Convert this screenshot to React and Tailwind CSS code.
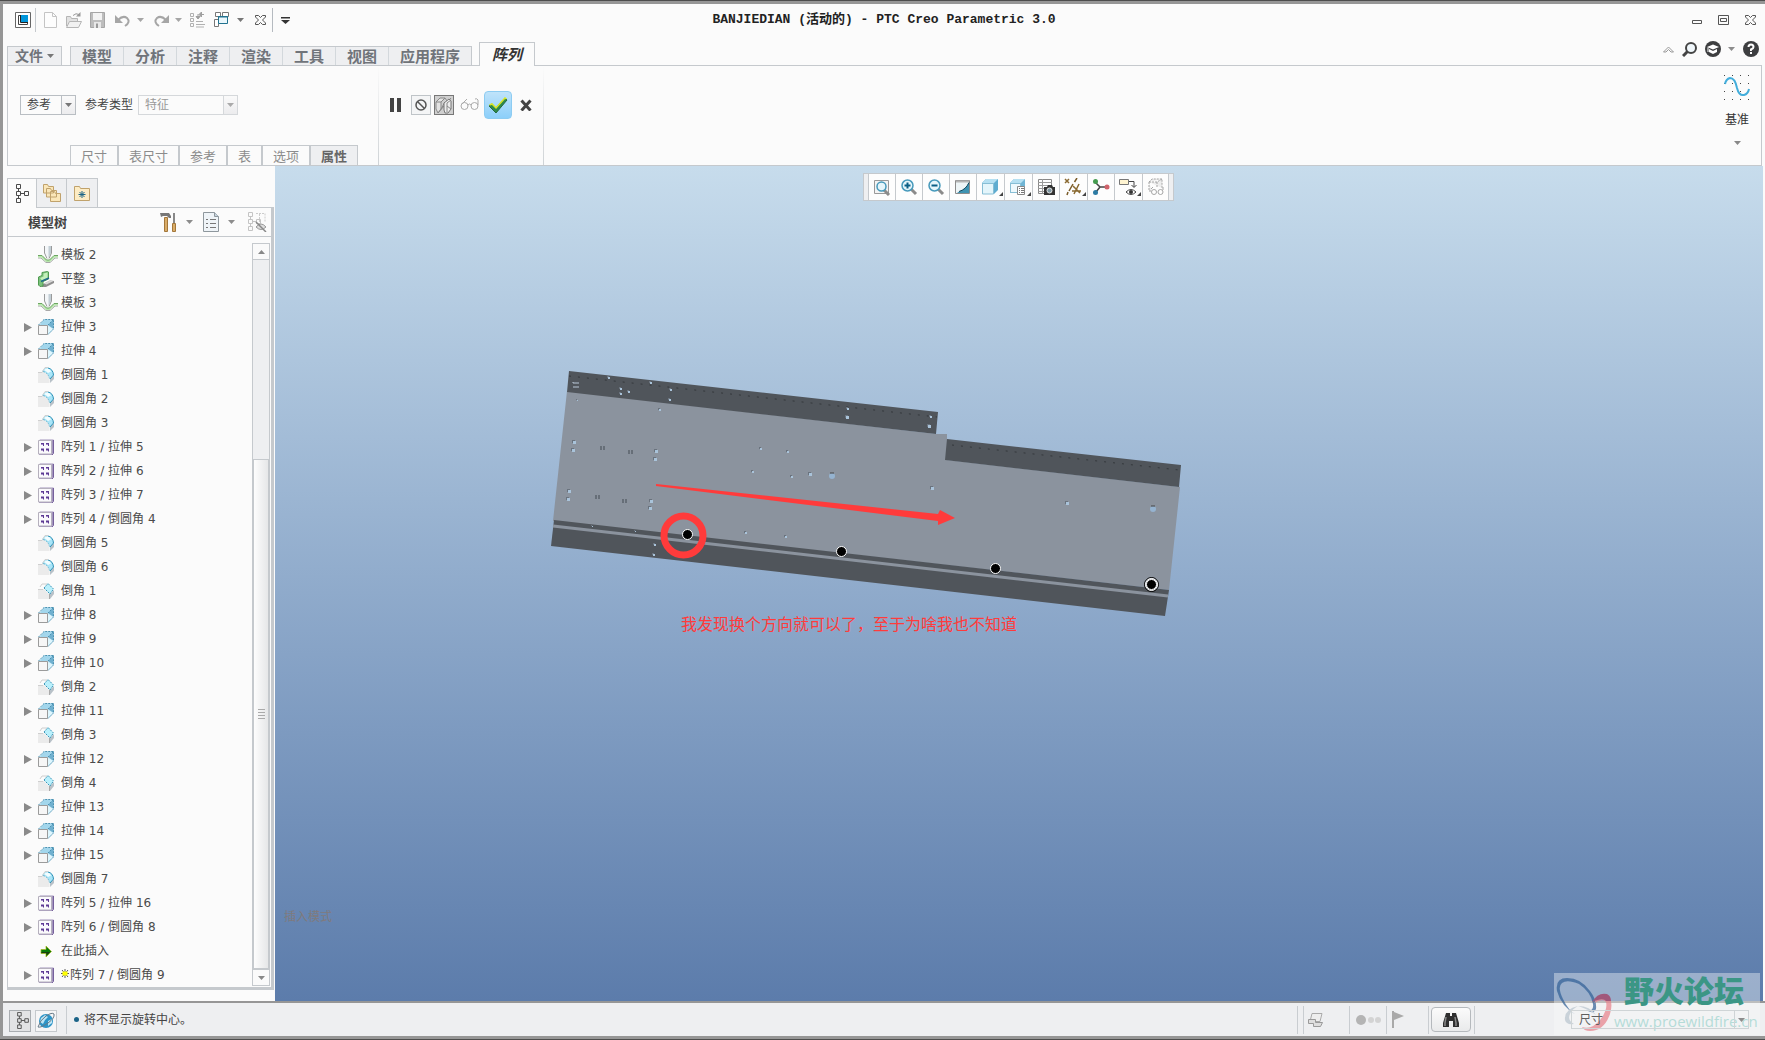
import React, { useState } from 'react';

const ribbonTabs = ['模型', '分析', '注释', '渲染', '工具', '视图', '应用程序'];

const panelTabs = ['尺寸', '表尺寸', '参考', '表', '选项', '属性'];

const treeItems = [
  { icon: 'punch', label: '模板 2' },
  { icon: 'flat', label: '平整 3' },
  { icon: 'punch', label: '模板 3' },
  { icon: 'extrude', label: '拉伸 3', open: true },
  { icon: 'extrude', label: '拉伸 4', open: true },
  { icon: 'round', label: '倒圆角 1' },
  { icon: 'round', label: '倒圆角 2' },
  { icon: 'round', label: '倒圆角 3' },
  { icon: 'pattern', label: '阵列 1 / 拉伸 5', open: true },
  { icon: 'pattern', label: '阵列 2 / 拉伸 6', open: true },
  { icon: 'pattern', label: '阵列 3 / 拉伸 7', open: true },
  { icon: 'pattern', label: '阵列 4 / 倒圆角 4', open: true },
  { icon: 'round', label: '倒圆角 5' },
  { icon: 'round', label: '倒圆角 6' },
  { icon: 'chamfer', label: '倒角 1' },
  { icon: 'extrude', label: '拉伸 8', open: true },
  { icon: 'extrude', label: '拉伸 9', open: true },
  { icon: 'extrude', label: '拉伸 10', open: true },
  { icon: 'chamfer', label: '倒角 2' },
  { icon: 'extrude', label: '拉伸 11', open: true },
  { icon: 'chamfer', label: '倒角 3' },
  { icon: 'extrude', label: '拉伸 12', open: true },
  { icon: 'chamfer', label: '倒角 4' },
  { icon: 'extrude', label: '拉伸 13', open: true },
  { icon: 'extrude', label: '拉伸 14', open: true },
  { icon: 'extrude', label: '拉伸 15', open: true },
  { icon: 'round', label: '倒圆角 7' },
  { icon: 'pattern', label: '阵列 5 / 拉伸 16', open: true },
  { icon: 'pattern', label: '阵列 6 / 倒圆角 8', open: true },
  { icon: 'insert', label: '在此插入' },
  { icon: 'pattern', label: '阵列 7 / 倒圆角 9', open: true, isNew: true }
];

// holes in the sheet metal part: x, y, size
const holes = [
  [608, 377, 2], [650, 382, 2], [620, 388, 2], [628, 391, 2], [620, 393, 2],
  [670, 389, 2], [669, 399, 2], [659, 409, 2], [846, 416, 3], [847, 408, 2],
  [577, 400, 1], [573, 441, 3], [572, 449, 3], [655, 450, 3], [654, 458, 3],
  [568, 490, 3], [567, 498, 3], [650, 500, 3], [649, 507, 3], [760, 448, 2],
  [787, 451, 2], [752, 471, 2], [791, 476, 2], [809, 473, 3], [930, 416, 2],
  [928, 425, 3], [931, 487, 3], [1066, 502, 3], [745, 532, 2], [785, 536, 2],
  [592, 526, 1], [635, 531, 1], [654, 544, 2], [653, 554, 2]
];

const slots = [[602, 448], [630, 452], [597, 497], [624, 501]];

const patternDots = [[687, 534], [841, 551], [995, 568], [1151, 584]];

function Icon({ size = 16, className = '', children }) {
  return (
    <svg width={size} height={size} viewBox={`0 0 ${size} ${size}`} className={`shrink-0 ${className}`} fill="none" aria-hidden="true">
      {children}
    </svg>
  );
}

function Caret({ className = 'text-[#8c8c8c]' }) {
  return (
    <svg width="7" height="4" viewBox="0 0 7 4" className={`shrink-0 ${className}`} aria-hidden="true">
      <path d="M0 0h7L3.5 4z" fill="currentColor" />
    </svg>
  );
}

function TreeGlyph({ color = '#4a4a4a' }) {
  return (
    <g stroke={color} fill="none">
      <path d="M1.5.5h4v4h-4zM1.5 7.5h4v4h-4zM1.5 14.5h4v4h-4zM9.5 7.5h4v4h-4zM3.5 4.5v3M3.5 11.5v3M5.5 9.5h4" />
    </g>
  );
}

function FeatureIcon({ name }) {
  if (name === 'punch') {
    return (
      <svg width="20" height="18" viewBox="0 0 20 18" className="shrink-0" fill="none" aria-hidden="true">
        <path d="M0 12h3l5 4.500h4L17 12h3" stroke="#a8a8a8" />
        <path d="M0 10.500h3.500l5 4.500h3l5-4.500H20" stroke="#b9e6ae" strokeWidth="2" />
        <path d="M0 9.500h4l4.500 4.500h3L16 9.500h4" stroke="#6da563" />
        <path d="M6.500 0v7l2.500 5h2l2.500-5V0z" fill="#f4f7f9" />
        <path d="M10.500 0H13v7l-2.500 5z" fill="#c2ced5" />
        <path d="M6.500 0v7l2.500 5.500M13.500 0v7L11 12.500" stroke="#9a9a9a" />
      </svg>
    );
  }
  if (name === 'flat') {
    return (
      <Icon>
        <path d="M3 14l9-4.500 4 .500v2l-8 4H4z" fill="#8f8f8f" />
        <path d="M6 12.500l6-3 3.500.500-7 3.500z" fill="#d8d8d8" />
        <path d="M.500 14V6L4 4.500V1.500L9.500.500l1 .500v7L5 10.500V15l-3 .500z" fill="#7cc27c" stroke="#4f9a50" />
        <path d="M2 7l3.500-1.500V2.500l4-1V7L4 9.500z" fill="#c4f0bb" />
        <path d="M3 10.500L11 7" stroke="#206a8c" strokeWidth="1.500" />
      </Icon>
    );
  }
  if (name === 'extrude') {
    return (
      <Icon>
        <path d="M1 6L6 .500h9.500V10L10 15.500H.500z" fill="#c9e9f6" />
        <path d="M6 .500h9.500L10 6H2z" fill="#a2d6ec" />
        <path d="M15.500.500V10L10 6z" fill="#6fb0cf" />
        <path d="M15 10l-5 5V7z" fill="#dff6fd" />
        <path d="M.500 6L6 .500h9.500V10L10 15.500M15.500.500L10 6" stroke="#4c92b2" strokeDasharray="2 1" />
        <path d="M.500 6.500h9v9h-9z" fill="#f6f6f6" stroke="#9b9b9b" />
      </Icon>
    );
  }
  if (name === 'round') {
    return (
      <Icon>
        <path d="M0 5h5q6 1 6.500 7v4H0z" fill="#ebebeb" />
        <path d="M12 12l4-4v4l-4 4z" fill="#b8c1c8" />
        <path d="M4 4q3-4 6-3 5 1 5.500 7L12 12Q11 6 4 4z" fill="#a9e5f8" />
        <path d="M6 3q2-2 4-1.500 2 .500 3 3L10 6q-2-2-4-3z" fill="#f2fdff" />
        <path d="M10 1q5 1 5.500 7L12 12" stroke="#2b8fb5" />
        <path d="M5 4.500q5 1 6.500 7" stroke="#60b4d0" strokeDasharray="2 1" />
        <path d="M0 5.500h4L7 .500h3" stroke="#cfcfcf" />
      </Icon>
    );
  }
  if (name === 'chamfer') {
    return (
      <Icon>
        <path d="M0 6h6l5 5v5H0z" fill="#ebebeb" />
        <path d="M12 11l4-4v4l-4 5z" fill="#b8c1c8" />
        <path d="M6 5l4-4.500L15.500 6 12 11z" fill="#b9f0fc" stroke="#3d96b8" strokeDasharray="2 1" />
        <path d="M0 6.500h5M2 4l2-3h5" stroke="#cfcfcf" />
        <path d="M11.500 11v5" stroke="#aaa" />
      </Icon>
    );
  }
  if (name === 'pattern') {
    return (
      <Icon>
        <path d="M1 1.500L2 .500h13.500V14L14 15.500H1z" fill="#a395bd" />
        <path d="M15.500 1v13.500L14 16H1" stroke="#76609c" />
        <path d="M.500 1.500h13v13.500H.500z" fill="#faf9fc" stroke="#b5b0bd" />
        <path d="M3 4h3v3H5V5H3zM8 4h3v3h-1V5H8zM3 9.500h3v3H5v-1H3zM8 9.500h3v3h-1v-1H8z" fill="#5d3a94" />
        <path d="M3 5h2v1H3zM8 5h2v1H8z" fill="#a48bc8" />
      </Icon>
    );
  }
  return (
    <Icon>
      <path d="M3 6.500h5V3l5.500 5.500L8 14v-3.500H3z" fill="#087a08" stroke="#a7b61d" strokeWidth=".7" />
      <path d="M3.500 9H12l-3.500 3.500V10h-5z" fill="#1d3d10" />
    </Icon>
  );
}

const magnifier = (
  <>
    <path d="M11 11l5 5" stroke="#8b8b8b" strokeWidth="3" />
    <circle cx="7.500" cy="7.500" r="5.500" fill="#e6f6fb" stroke="#4699bb" strokeWidth="1.500" />
  </>
);

// ## Graphics toolbar
const viewTools = [
  {
    name: '重新调整',
    art: (
      <>
        <path d="M1.500 2.500h14v13h-14z" fill="#f4f4f4" stroke="#999" />
        <path d="M11 12l5 5" stroke="#8b8b8b" strokeWidth="3" />
        <circle cx="8.500" cy="8.500" r="4.500" fill="#e6f6fb" stroke="#4699bb" strokeWidth="1.500" />
      </>
    )
  },
  { name: '放大', art: <>{magnifier}<path d="M4.500 7.500h6M7.500 4.500v6" stroke="#0b5f86" strokeWidth="2" /></> },
  { name: '缩小', art: <>{magnifier}<path d="M4.500 7.500h6" stroke="#0b5f86" strokeWidth="2" /></> },
  {
    name: '重画',
    art: (
      <>
        <path d="M1.500 2.500h14v13h-14z" fill="#eef5f7" stroke="#8c8c8c" />
        <path d="M15 4v11H3l3-2q6-2 9-9z" fill="#3f93b2" />
        <path d="M5 13.500q7-2 10-9" stroke="#12495e" />
        <path d="M2 3.500h13" stroke="#b5b5b5" strokeWidth="2" />
      </>
    )
  },
  {
    name: '显示样式',
    menu: true,
    art: (
      <>
        <path d="M1 5l4-4h12v11l-4 4H1z" fill="#5eacd0" />
        <path d="M1 5l4-4h12l-4 4z" fill="#b5e0f2" />
        <path d="M1.500 5.500h11v10.500h-11z" fill="#e3f5fb" stroke="#87bed5" />
      </>
    )
  },
  {
    name: '已命名视图',
    menu: true,
    art: (
      <>
        <path d="M1 5l4-4h11v11l-4 3H1z" fill="#6fb5d5" />
        <path d="M1 5l4-4h11l-4 4z" fill="#b5e0f2" />
        <path d="M1.500 5.500h10v9h-10z" fill="#eef9fd" stroke="#87bed5" />
        <path d="M8.500 8.500h7v8h-7z" fill="#fff" stroke="#888" />
        <path d="M10 10.500h1M12 10.500h3M10 12.500h1M12 12.500h3M10 14.500h1M12 14.500h3" stroke="#777" />
      </>
    )
  },
  {
    name: '视图管理器',
    art: (
      <>
        <path d="M1.500 1.500h13v14h-13z" fill="#fff" stroke="#888" />
        <path d="M5.500 1v15M1 4.500h14M1 7.500h14M1 10.500h14M1 13.500h14" stroke="#999" />
        <path d="M7 9h3l1-2h4l1 2h2v8H7z" fill="#333" />
        <circle cx="12.500" cy="12.500" r="2.500" fill="#7d96a1" stroke="#e4e4e4" />
      </>
    )
  },
  {
    name: '基准显示过滤器',
    menu: true,
    art: (
      <>
        <path d="M1 1l4 4M5 1L1 5" stroke="#8a6a32" strokeWidth="1.500" />
        <path d="M13 0l-2.500 4M9 6l-4 7M4 14l-1 3" stroke="#7a5b28" strokeWidth="1.500" />
        <path d="M9 8l7 7M15 6l-5 10M8 13h9" stroke="#8a6a32" strokeWidth="1.500" />
      </>
    )
  },
  {
    name: '旋转中心',
    art: (
      <>
        <path d="M3 4l5 5-4 5M8 9h6" stroke="#444" strokeWidth="1.500" />
        <circle cx="3.500" cy="3.500" r="2.500" fill="#459c50" />
        <circle cx="3.500" cy="14.500" r="2.500" fill="#2d7ba4" />
        <circle cx="15" cy="9" r="2.500" fill="#d0636b" />
      </>
    )
  },
  {
    name: '注释显示',
    menu: true,
    art: (
      <>
        <path d="M.500 1.500h9v5h-9z" fill="#fff4d1" stroke="#777" />
        <path d="M10 3.500h5V9M12.500 7l2.500 2.500L17.500 7" stroke="#444" />
        <path d="M7 14q5-5 10 0-5 5-10 0z" fill="#fff" stroke="#444" />
        <circle cx="12" cy="14" r="2" fill="#333" />
      </>
    )
  },
  {
    name: '预览',
    art: (
      <g stroke="#a5a5a5">
        <path d="M2 4l3-3h10v9M2 4v9h3M2 4h8l5-3M10 4v6" fill="#ededed" strokeDasharray="2 1" />
        <circle cx="7" cy="14" r="2.500" fill="#fff" />
        <circle cx="13.500" cy="14" r="2.500" fill="#fff" />
        <path d="M4 11l2-2M16 12V9" />
      </g>
    )
  }
];

function QuickAccess() {
  const button = 'flex h-6 items-center';
  return (
    <div className="flex items-center">
      <button type="button" aria-label="窗口" className={`${button} ml-3`}>
        <Icon>
          <path d="M.500.500h15v15H.500z" fill="#fff" stroke="#666" />
          <path d="M3.500 3.500h9v9h-9z" stroke="#444" />
          <path d="M6 3h7v7H6z" fill="#0096db" />
          <path d="M5.500 3v7.500H13" stroke="#222" />
        </Icon>
      </button>
      <span className="ml-1 h-6 w-px bg-[#c5c9cd]" />
      <button type="button" aria-label="新建" className={`${button} ml-[7px]`}>
        <Icon>
          <path d="M1.500.500h8l4 4v11h-12z" fill="#fdfdfd" stroke="#c4c4c4" />
          <path d="M9.500.500v4h4" stroke="#c4c4c4" />
        </Icon>
      </button>
      <button type="button" aria-label="打开" className={`${button} ml-[7px]`}>
        <Icon>
          <path d="M.500 14V4.500h4l1 2h6v3" fill="#e2e2e2" stroke="#b5b5b5" />
          <path d="M.500 15.500l3-6h12l-3 6z" fill="#f1f1f1" stroke="#b5b5b5" />
          <path d="M7 3.500q3-3 6-1" stroke="#999" />
          <path d="M14.500 0v4.500H10z" fill="#999" />
        </Icon>
      </button>
      <button type="button" aria-label="保存" className={`${button} ml-2`}>
        <Icon>
          <path d="M.500.500h14v15H.500z" fill="#bdbdbd" stroke="#a6a6a6" />
          <path d="M3 1h9v7H3z" fill="#f3f3f3" />
          <path d="M4 10h7v6H4z" fill="#e8e8e8" />
          <path d="M6 11.500h2V16H6z" fill="#999" />
        </Icon>
      </button>
      <button type="button" aria-label="撤消" className={`${button} ml-[9px]`}>
        <Icon>
          <path d="M3 8q5-5 9-2 4 4-2 8" stroke="#a6a6a6" strokeWidth="2" />
          <path d="M0 3v8h8z" fill="#a6a6a6" />
        </Icon>
      </button>
      <button type="button" aria-label="撤消列表" className={`${button} ml-[6px]`}><Caret className="text-[#a6a6a6]" /></button>
      <button type="button" aria-label="重做" className={`${button} ml-[9px]`}>
        <Icon>
          <path d="M13 8Q8 3 4 6q-4 4 2 8" stroke="#a6a6a6" strokeWidth="2" />
          <path d="M16 3v8H8z" fill="#a6a6a6" />
        </Icon>
      </button>
      <button type="button" aria-label="重做列表" className={`${button} ml-[6px]`}><Caret className="text-[#a6a6a6]" /></button>
      <button type="button" aria-label="重新生成" className={`${button} ml-2`}>
        <Icon>
          <path d="M.500 1.500h3v3h-3zM.500 6.500h3v3h-3zM.500 11.500h3v3h-3zM6 9.500h7M6 12.500h9M6 15h8" stroke="#b1b1b1" />
          <path d="M8 5V2M6 4.500l2 2.500 2-2.500zM10 2.500h4M11.500 0L9 2.500 11.500 5z" stroke="#a0a0a0" fill="#a0a0a0" />
        </Icon>
      </button>
      <button type="button" aria-label="切换窗口" className={`${button} ml-2`}>
        <Icon>
          <path d="M1.500.500h5v4h-5zM8.500.500h6v4h-6zM.500 7.500h4v7h-4z" fill="#fff" stroke="#777" />
          <path d="M4.500 4.500h9v7h-9z" fill="#eaf7fc" stroke="#21728f" />
          <path d="M4 5h10" stroke="#21728f" />
        </Icon>
      </button>
      <button type="button" aria-label="窗口列表" className={`${button} ml-[7px]`}><Caret className="text-[#777]" /></button>
      <button type="button" aria-label="关闭" className={`${button} ml-[11px] text-[#555]`}><CloseGlyph /></button>
      <span className="ml-[6px] h-6 w-px bg-[#b5bac0]" />
      <button type="button" aria-label="自定义快速访问工具栏" className={`${button} ml-2`}>
        <svg width="9" height="7" viewBox="0 0 9 7" fill="#333" aria-hidden="true">
          <path d="M0 0h9v1.500H0zM0 3h9L4.500 7z" />
        </svg>
      </button>
    </div>
  );
}

function CloseGlyph() {
  return (
    <svg width="11" height="10" viewBox="0 0 11 10" fill="none" aria-hidden="true">
      <path d="M.500.500h3l2 2 2-2h3v1.500l-3 3 3 3v1.500h-3l-2-2-2 2h-3V8l3-3-3-3z" stroke="currentColor" />
    </svg>
  );
}

function TitleBar() {
  return (
    <header className="grid h-8 grid-cols-[1fr_auto_1fr] items-center">
      <QuickAccess />
      <h1 className="font-['Liberation_Mono','Noto_Sans_CJK_SC',monospace] text-[13px] leading-4 font-bold text-[#222]">
        BANJIEDIAN (活动的) - PTC Creo Parametric 3.0
      </h1>
      <div className="mr-[9px] flex items-center justify-end gap-4 text-[#555]">
        <button type="button" aria-label="最小化">
          <svg width="10" height="10" viewBox="0 0 10 10" fill="none"><path d="M.500 5.500h9v3h-9z" stroke="currentColor" /></svg>
        </button>
        <button type="button" aria-label="最大化">
          <svg width="11" height="10" viewBox="0 0 11 10" fill="none"><path d="M.500.500h10v9H.500zM2.500 3.500h6v3h-6z" stroke="currentColor" /></svg>
        </button>
        <button type="button" aria-label="关闭窗口"><CloseGlyph /></button>
      </div>
    </header>
  );
}

function RibbonTabs() {
  const tab = 'h-[18px] border-r border-[#d3d8dc] px-[11px] text-[15px] leading-4 font-bold text-[#70747a]';
  return (
    <nav className="ml-1 flex h-[29px] items-end">
      <button type="button" className="flex h-[19px] w-[55px] items-center justify-center gap-1 border border-b-0 border-[#c5c9cd] bg-[#eeeff1] text-sm leading-4 font-bold text-[#70747a]">
        文件
        <Caret className="text-[#777]" />
      </button>
      <div className="ml-2 flex border border-b-0 border-[#c5c9cd] bg-[#eeeff1]">
        {ribbonTabs.map((name) => (
          <button key={name} type="button" className={`${tab} last:border-r-0`}>
            {name}
          </button>
        ))}
      </div>
      <button type="button" className="relative -mb-px ml-[7px] h-6 w-14 border border-b-0 border-[#c5c9cd] bg-[#fbfbfb] text-[15px] font-bold text-[#333] italic">
        阵列
      </button>
      <div className="mr-[6px] mb-2 ml-auto flex items-center">
        <button type="button" aria-label="最小化功能区">
          <svg width="11" height="7" viewBox="0 0 11 7" fill="none"><path d="M.500 6L5.500 1l5 5H8L5.500 3.500 3 6z" stroke="#999" /></svg>
        </button>
        <button type="button" aria-label="搜索" className="ml-2">
          <Icon>
            <path d="M6 10l-5 5" stroke="#444" strokeWidth="3" />
            <circle cx="9" cy="7" r="5" fill="#f0f7fb" stroke="#444" strokeWidth="2" />
          </Icon>
        </button>
        <button type="button" aria-label="学习" className="ml-[7px]">
          <Icon>
            <circle cx="8" cy="8" r="8" fill="#3d3e40" />
            <path d="M2 6l6-2.500L14 6 8 8.500z" fill="#fff" />
            <path d="M4 8v3l4 2 4-2V8l-4 2z" fill="#fff" />
            <path d="M3 6.500V11" stroke="#fff" />
          </Icon>
        </button>
        <button type="button" aria-label="学习列表" className="ml-[7px]"><Caret /></button>
        <button type="button" aria-label="帮助" className="ml-2">
          <Icon>
            <circle cx="8" cy="8" r="8" fill="#3d3e40" />
            <path d="M5.500 6q0-2.500 2.500-2.500T10.500 6Q10.500 7.500 8 8.500V10" stroke="#fff" strokeWidth="2" />
            <path d="M7 11h2v2H7z" fill="#fff" />
          </Icon>
        </button>
      </div>
    </nav>
  );
}

function ComboBox({ label, value, disabled, className }) {
  return (
    <div className={`relative flex h-5 items-center border ${disabled ? 'border-[#d5d8db] text-[#999]' : 'border-[#b9bec3] text-[#444]'} ${className}`}>
      <select aria-label={label} disabled={disabled} defaultValue={value} className="h-4 w-full appearance-none pl-[6px] text-xs leading-4 opacity-100 outline-none">
        <option>{value}</option>
      </select>
      <span className="pointer-events-none absolute inset-y-0 right-0 flex w-[14px] items-center justify-center border-l border-inherit bg-gradient-to-b from-[#fafafa] to-[#ececee]">
        <Caret className={disabled ? 'text-[#aaa]' : 'text-[#777]'} />
      </span>
    </div>
  );
}

function Dashboard() {
  const divider = 'w-px bg-gradient-to-b from-transparent to-[#cfd3d6]';
  return (
    <section className="mr-[3px] ml-1 flex h-[101px] border border-[#c5c9cd]">
      <div className="flex w-[370px] flex-col justify-end pl-3">
        <div className="mb-[30px] flex items-center">
          <ComboBox label="阵列类型" value="参考" className="w-14" />
          <span className="ml-[9px] text-xs leading-4 text-[#444]">参考类型</span>
          <ComboBox label="参考类型" value="特征" disabled className="ml-[5px] w-[100px]" />
        </div>
        <div className="ml-[50px] flex self-start border-t border-[#c5c9cd]">
          {panelTabs.map((name) => (
            <button
              key={name}
              type="button"
              className="h-[19px] border-x border-[#c5c9cd] px-[10px] text-[13px] leading-4 text-[#8c8c8c] last:bg-[#eeeff1] last:font-bold last:text-[#666]"
            >
              {name}
            </button>
          ))}
        </div>
      </div>
      <span className={divider} />
      <div className="flex w-[164px] items-center pb-[22px] pl-[11px]">
        <button type="button" aria-label="暂停" className="flex h-[14px] w-[11px] justify-between">
          <span className="h-full w-1 bg-[#444]" />
          <span className="h-full w-1 bg-[#444]" />
        </button>
        <button type="button" aria-label="无预览" className="ml-[10px] flex size-5 items-center justify-center border border-[#bfc4c8] bg-[#f4f5f6]">
          <Icon size={14}>
            <circle cx="7" cy="7" r="5" stroke="#555" strokeWidth="1.500" />
            <path d="M3.500 3.500l7 7" stroke="#555" strokeWidth="1.500" />
          </Icon>
        </button>
        <button type="button" aria-label="连接预览" className="ml-[3px] flex size-5 items-center justify-center border border-[#777] bg-[#cfcfcf]">
          <Icon size={18}>
            <path d="M1 6l4-4h5L6 6v7l-3 4-2-4zM6 6H1M10 2l2 3v8M3 17L16 2M6 13l4-7" fill="#e3e3e3" stroke="#888" />
            <path d="M9 7l5-4 2 2v8l-3 4h-3l-1-3z" fill="#ededed" stroke="#777" />
            <path d="M12 7v9M12 7l4-3M16 13l-4-3" stroke="#888" />
          </Icon>
        </button>
        <button type="button" aria-label="校验" className="ml-[6px]">
          <Icon size={20}>
            <circle cx="4.500" cy="11" r="3.500" stroke="#aaa" />
            <circle cx="14.500" cy="11" r="3.500" stroke="#aaa" />
            <path d="M1 10L7 4M8 10q1.500-2 3 0M18 10V5q-1-2-3-1" stroke="#aaa" />
          </Icon>
        </button>
        <button type="button" aria-label="确定" className="ml-1 flex size-7 items-center justify-center rounded-sm border border-[#8dccf2] bg-gradient-to-b from-[#bfe3fa] to-[#8ccffa]">
          <Icon size={20}>
            <path d="M1 11l3-2 4 4L17 3l2 2L8 18z" fill="#2d8a4b" stroke="#256a3e" />
            <path d="M1.500 10L4 9l4 4 9-10 1.500 1" stroke="#d7e524" strokeWidth="1.500" />
          </Icon>
        </button>
        <button type="button" aria-label="取消" className="ml-2">
          <Icon size={12}>
            <path d="M1.500 1.500l9 10M10.500 1.500l-9 10" stroke="#444" strokeWidth="3" />
          </Icon>
        </button>
      </div>
      <span className={divider} />
      <button type="button" className="mr-[11px] ml-auto flex flex-col items-center pt-2 text-xs text-[#333]">
        <Icon size={26}>
          <g fill="#444">
            {[0, 8, 16, 24].map((x) => [0, 8, 16, 24].map((y) => <rect key={`${x}-${y}`} x={x} y={y + 1} width="1" height="1" />))}
          </g>
          <path d="M1 10Q2 5 6 4q5 0 7 10 2 8 7 7 4-1 5-6" stroke="#42addb" strokeWidth="2" />
        </Icon>
        <span className="mt-3 leading-4">基准</span>
        <Caret className="mt-[13px] text-[#888]" />
      </button>
    </section>
  );
}

function ModelTree() {
  return (
    <aside className="flex w-[272px] shrink-0 flex-col pt-3 pr-px pb-[11px] pl-1">
      <div className="flex h-[29px]">
        <button type="button" aria-label="模型树" className="relative -mb-px flex w-[30px] items-center justify-center border border-b-0 border-[#c5c9cd] bg-[#fbfbfb]">
          <svg width="15" height="19" viewBox="0 0 15 19"><TreeGlyph /></svg>
        </button>
        <button type="button" aria-label="文件夹浏览器" className="flex w-[30px] items-center justify-center border border-b-0 border-l-0 border-[#c5c9cd] bg-[#eeeff1]">
          <Icon size={20}>
            <path d="M1.500 10V1.500h4l1 2h5V10zM4.500 14V5.500h4l1 2h5V14zM8.500 18.500v-10h4l1 2h5v8z" fill="#fae6b8" stroke="#c0a26c" />
          </Icon>
        </button>
        <button type="button" aria-label="收藏夹" className="flex w-[31px] items-center justify-center border border-b-0 border-l-0 border-[#c5c9cd] bg-[#eeeff1]">
          <Icon size={18}>
            <path d="M1.500 16.500v-14h5l1 2h9v12z" fill="#fdecc4" stroke="#c0a26c" />
            <path d="M9 7v7M5.500 10.500h7M6.500 8l5 5M11.500 8l-5 5" stroke="#1c6687" />
          </Icon>
        </button>
      </div>
      <div className="flex flex-1 flex-col border border-r-[3px] border-b-[3px] border-[#c5c9cd]">
        <div className="flex h-[29px] items-center border-b border-[#c5c9cd] pr-1 pl-5">
          <h2 className="text-[13px] leading-4 font-bold text-[#444]">模型树</h2>
          <button type="button" aria-label="设置" className="ml-auto">
            <svg width="18" height="20" viewBox="0 0 18 20" fill="none">
              <path d="M0 1h9l2 3v2H9L7 4H3L1 5z" fill="#777" />
              <path d="M4.500 5.500h3v14h-3z" fill="#d9ac68" stroke="#a3773a" />
              <path d="M14 1v10" stroke="#888" strokeWidth="2" />
              <path d="M12.500 11.500h3v8h-3z" fill="#d9ac68" stroke="#a3773a" />
            </svg>
          </button>
          <button type="button" aria-label="设置列表" className="ml-2"><Caret /></button>
          <button type="button" aria-label="显示" className="ml-[10px]">
            <svg width="16" height="20" viewBox="0 0 16 20" fill="none">
              <path d="M.500.500h11l4 4v15H.500z" fill="#eff4f8" stroke="#8e979d" />
              <path d="M11.500.500v4h4" fill="#c5d3dd" stroke="#8e979d" />
              <path d="M7 7.500h6M7 11.500h6M7 15.500h6M3 7.500h2M3 11.500h2M3 15.500h2" stroke="#777" />
            </svg>
          </button>
          <button type="button" aria-label="显示列表" className="ml-[9px]"><Caret /></button>
          <button type="button" aria-label="隐藏" className="ml-3">
            <svg width="20" height="20" viewBox="0 0 20 20" fill="none">
              <TreeGlyph color="#c4c4c4" />
              <path d="M9 1.500h9v9M12.500 2v8" stroke="#ccc" strokeDasharray="2 1" />
              <path d="M9 15q5-6 10 0-5 5-10 0z" fill="#ddd" stroke="#999" />
              <path d="M9 10l10 10" stroke="#888" strokeWidth="1.500" />
            </svg>
          </button>
        </div>
        <div className="flex flex-1">
          <ul className="flex-1 pt-[6px] font-['DejaVu_Sans','Noto_Sans_CJK_SC',sans-serif] text-xs text-[#4a4a4a]">
            {treeItems.map((item) => (
              <li key={item.label} className="flex h-6 items-center pl-4">
                <span className="w-[14px]">
                  {item.open && (
                    <svg width="8" height="9" viewBox="0 0 8 9" aria-hidden="true"><path d="M0 0l8 4.500L0 9z" fill="#8a8a8a" /></svg>
                  )}
                </span>
                <span className="w-[23px]"><FeatureIcon name={item.icon} /></span>
                {item.isNew && (
                  <svg width="9" height="9" viewBox="0 0 9 9" className="mb-1" fill="none" aria-hidden="true">
                    <path d="M0 4.500h8M4 0v9M1 1l6 7M7 1L1 8" stroke="#333" strokeWidth=".8" />
                    <path d="M1.500 2.500h5v4h-5z" fill="#ff0" />
                  </svg>
                )}
                <span className="leading-4">{item.label}</span>
              </li>
            ))}
          </ul>
          <div className="mt-[6px] mr-px mb-px flex w-[18px] flex-col border border-[#c5c9cd] bg-[#eeeff1]">
            <button type="button" aria-label="向上滚动" className="flex h-4 items-center justify-center border-b border-[#c5c9cd] bg-[#fafafa]">
              <Caret className="rotate-180 text-[#888]" />
            </button>
            <div className="flex-[199]" />
            <div className="flex flex-[509] flex-col items-center justify-center gap-[2px] border border-[#c5c9cd] bg-gradient-to-r from-[#fdfdfd] to-[#e6e7e8]">
              <span className="h-px w-[7px] bg-[#aaa]" />
              <span className="h-px w-[7px] bg-[#aaa]" />
              <span className="h-px w-[7px] bg-[#aaa]" />
              <span className="h-px w-[7px] bg-[#aaa]" />
            </div>
            <button type="button" aria-label="向下滚动" className="flex h-4 items-center justify-center border-t border-[#c5c9cd] bg-[#fafafa]">
              <Caret className="text-[#888]" />
            </button>
          </div>
        </div>
      </div>
    </aside>
  );
}

// ## Sheet metal part with the pattern preview dots
function Part() {
  return (
    <svg width="650" height="270" viewBox="540 360 650 270" className="absolute top-[194px] left-[265px]" fill="none">
      <path d="M567 391L936 434h11v26l233 27-11 103-616-69z" fill="#8b939e" />
      <path d="M569 371l369 41-2 22-369-42z" fill="#50555b" />
      <path d="M947 439l234 26-2 22-234-27z" fill="#50555b" />
      <path d="M554 520l615 70-4 26-614-70z" fill="#50555b" />
      <path d="M553 526l615 70" stroke="#8b939e" strokeWidth="3" />
      <path d="M569 376l368 41M952 445l227 25" stroke="#34383c" strokeDasharray="2 7" />
      <path d="M573 383h6M573 387h6M573 382v1" stroke="#b8c8d8" />
      {slots.map(([x, y]) => (
        <path key={`${x}-${y}`} d={`M${x - 2} ${y - 1}h2m1 0h2m-5 2h2m1 0h2`} stroke="#434a52" />
      ))}
      {holes.map(([x, y, size]) => (
        <g key={`${x}-${y}`}>
          <rect x={x - 1} y={y - 1} width={size} height={size} fill="#6a737e" />
          <rect x={x} y={y} width={size} height={size} fill="#a9c3da" />
        </g>
      ))}
      <circle cx="832" cy="476" r="3" fill="#95b3d0" />
      <circle cx="1153" cy="509" r="3" fill="#95b3d0" />
      <path d="M830 473h4M1151 506h4" stroke="#444" />
      <path d="M656 484l282 30 2-4 15 8-17 7v-4L656 486z" fill="#ff3b3b" />
      <circle cx="683.5" cy="535.5" r="19.5" stroke="#ff3b3b" strokeWidth="7" />
      {patternDots.map(([cx, cy]) => (
        <circle key={cx} cx={cx + 0.5} cy={cy + 0.5} r="5" fill="#000" stroke="#fff" />
      ))}
      <circle cx="1151.5" cy="584.5" r="7" stroke="#000" />
      <circle cx="1151.5" cy="584.5" r="6" stroke="#fff" />
    </svg>
  );
}

function GraphicsArea() {
  return (
    <main className="relative flex-1 overflow-hidden bg-gradient-to-b from-[#c7dcec] to-[#5c7cab]">
      <div className="absolute top-[7px] left-[588px] flex h-7 border border-[#c5c9cd] bg-[#eeeff1]">
        <span className="w-1" />
        {viewTools.map((tool) => (
          <button
            key={tool.name}
            type="button"
            aria-label={tool.name}
            className={`relative flex items-center border-l border-[#c5c9cd] bg-[#fdfdfd] pl-1 last-of-type:border-r ${tool.menu ? 'w-7' : 'w-[27px]'}`}
          >
            <Icon size={18}>{tool.art}</Icon>
            {tool.menu && (
              <svg width="4" height="4" viewBox="0 0 4 4" className="absolute right-px bottom-1" aria-hidden="true"><path d="M4 0v4H0z" fill="#444" /></svg>
            )}
          </button>
        ))}
        <span className="w-1" />
      </div>
      <Part />
      <p className="absolute top-[446px] left-[406px] text-base leading-6 whitespace-nowrap text-[#ff3b3b]">
        我发现换个方向就可以了，至于为啥我也不知道
      </p>
      <p className="absolute bottom-[76px] left-[9px] text-xs leading-4 text-[#7f7a7d]">插入模式</p>
    </main>
  );
}

function StatusBar() {
  const [filter, setFilter] = useState('尺寸');
  const separator = 'h-7 w-px bg-[#c9cdd1]';

  return (
    <footer className="relative flex h-[35px] items-center border-t-2 border-[#969696] bg-[#eeeff1] pl-[6px] text-xs text-[#444]">
      <button type="button" aria-label="导航器" className="mt-[2px] flex size-[22px] items-center justify-end border border-[#a9adb1] bg-[#e2e3e5]">
        <svg width="14" height="17" viewBox="0 0 15 19"><TreeGlyph /></svg>
      </button>
      <button type="button" aria-label="浏览器" className="mt-[2px] ml-1 flex size-[22px] items-center justify-center border border-[#c5c9cd] bg-[#f6f6f7]">
        <Icon size={18}>
          <circle cx="9" cy="9" r="7" fill="#2d94c7" />
          <path d="M4 6l4-3 3 2-3 3-2 4-3-2zM11 9l4-2v4l-4 3z" fill="#bce4f4" />
          <path d="M1 15Q3 8 9 4t8-2q1 4-6 9T1 15z" stroke="#667987" />
        </Icon>
      </button>
      <span className={`${separator} ml-[9px]`} />
      <span className="ml-[7px] size-[5px] rounded-full bg-[#1b6387]" />
      <span className="ml-[5px] leading-4">将不显示旋转中心。</span>
      <div className="ml-auto flex items-center">
        <span className={separator} />
        <span className={`${separator} ml-[5px]`} />
        <Icon className="ml-1">
          <path d="M4 1.500h10l-2 8H2z" fill="#eee" stroke="#aaa" />
          <path d="M.500 7.500h7v3h7l-2 4h-7v-3h-5z" fill="#dedede" stroke="#999" />
        </Icon>
        <span className={`${separator} ml-[25px]`} />
        <svg width="26" height="12" viewBox="0 0 26 12" className="ml-[6px]" aria-hidden="true">
          <circle cx="5" cy="6" r="5" fill="#b4b4b4" />
          <circle cx="15" cy="6" r="3" fill="#d3d3d3" />
          <circle cx="22" cy="6" r="3" fill="#d3d3d3" />
        </svg>
        <span className={`${separator} ml-1`} />
        <svg width="12" height="17" viewBox="0 0 12 17" className="ml-[5px]" aria-hidden="true">
          <path d="M0 0h2v17H0zM2 1l10 4-10 4z" fill="#a9a9a9" />
        </svg>
        <span className={`${separator} ml-6`} />
        <button type="button" aria-label="查找" className="ml-[2px] flex h-[25px] w-10 items-center justify-center rounded-sm border border-[#b5b9bd] bg-gradient-to-b from-[#fbfbfb] to-[#e9eaeb]">
          <Icon>
            <path d="M3 1h4v3h2V1h4l3 10v4h-6V9H6v6H0v-4z" fill="#2f2f2f" />
            <path d="M3 5l-1 6v3M12 5l1 6v3" stroke="#888" strokeWidth="1.500" />
          </Icon>
        </button>
        <span className={`${separator} ml-[3px]`} />
        <div className="relative z-10 mr-4 ml-24 flex h-[19px] w-[178px] items-center border border-[#cfd4d6] text-[#5f5f5f]">
          <select aria-label="选择过滤器" value={filter} onChange={(e) => setFilter(e.target.value)} className="h-4 w-full appearance-none pl-[7px] text-xs leading-4 outline-none">
            <option>尺寸</option>
          </select>
          <span className="pointer-events-none absolute inset-y-0 right-0 flex w-[14px] items-center justify-center border-l border-[#cfd4d6]">
            <Caret />
          </span>
        </div>
      </div>
      <Watermark />
    </footer>
  );
}

function Watermark() {
  return (
    <div className="pointer-events-none absolute right-[5px] bottom-px flex h-[62px] w-[206px] bg-[#f8fafa]/40">
      <svg width="60" height="62" viewBox="0 0 60 62" className="shrink-0 opacity-70" fill="none" aria-hidden="true">
        <path d="M22 42Q7 33 3 18 1 5 13 5q14 0 23 13 7 9 6 18-2 5-8 2 6 0 5-7-2-12-14-20Q13 6 8 10q-5 4 1 16 5 11 13 16z" fill="#2f5f96" />
        <path d="M40 30q5-9 13-7 7 4 3 18-6 17-20 17-6 0-8-4 10 3 18-7 8-10 6-18-3-4-12 1z" fill="#e8808a" />
        <path d="M38 29q6-10 15-8 4 2 4 7h-5q-3-4-14 1z" fill="#a5345b" />
        <path d="M24 33q-14 3-13 14 1 5 9 4-7-4-4-10 2-5 8-8zM24 33q12 0 18 9-8-6-18-9z" fill="#b9c5cf" />
      </svg>
      <div className="flex flex-col">
        <strong className="ml-[10px] text-3xl leading-9 font-black text-[#3b9685]">野火论坛</strong>
        <span className="text-[15px] leading-6 whitespace-nowrap text-[#b5dcd8]">www.proewildfire.cn</span>
      </div>
    </div>
  );
}

export default function App() {
  return (
    <div className="flex min-h-screen flex-col border-y border-[#4d4d4d] bg-[#fbfbfb] font-['Open_Sans','Noto_Sans_CJK_SC',sans-serif]">
      <div className="flex flex-1 flex-col border-y-[3px] border-l-[3px] border-[#969696]">
        <TitleBar />
        <RibbonTabs />
        <Dashboard />
        <div className="mr-[2px] flex flex-1">
          <ModelTree />
          <GraphicsArea />
        </div>
        <StatusBar />
      </div>
    </div>
  );
}
